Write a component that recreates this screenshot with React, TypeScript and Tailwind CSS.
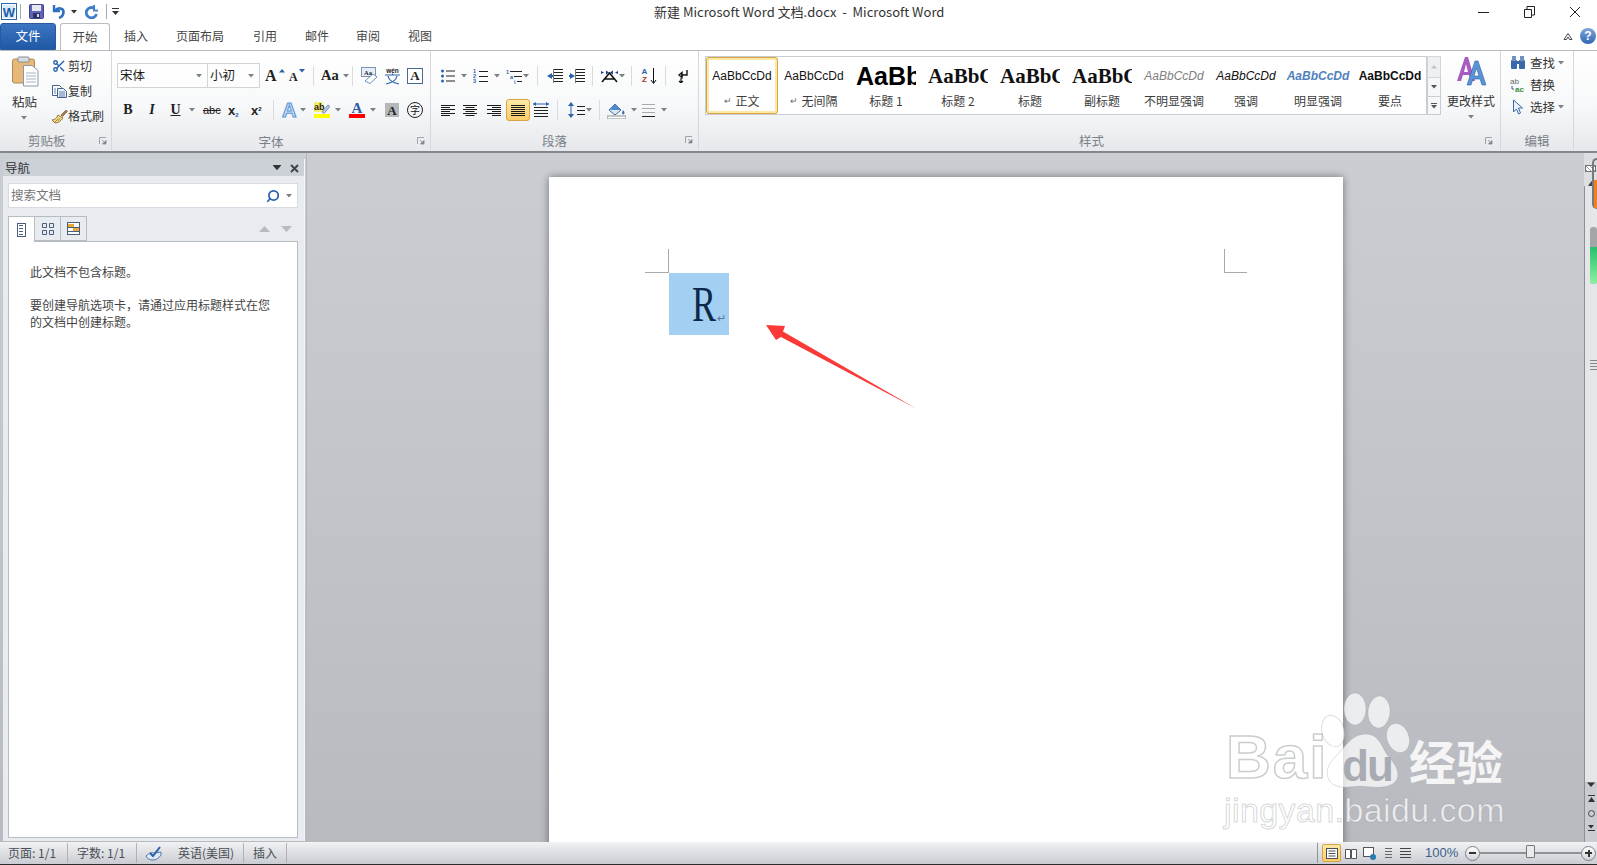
import React from "react";
import { Scissors, Search } from "lucide-react";

const cjk = "font-['Noto_Sans_CJK_SC','Liberation_Sans',sans-serif]";

type P = { className?: string };
const S = ({ w, h, className = "", children }: { w: number; h: number; className?: string; children?: React.ReactNode }) => (
  <svg width={w} height={h} viewBox={`0 0 ${w} ${h}`} className={`shrink-0 block ${className}`}>{children}</svg>
);
const Caret = ({ className = "", c = "#7d8084" }: P & { c?: string }) => (
  <S w={6} h={4} className={className}><path d="M0 0h6L3 3.5z" fill={c} /></S>
);
const Sep = ({ className = "" }: P) => <div className={`w-[1px] h-[20px] bg-[#d9dbdf] shrink-0 ${className}`} />;
const Launcher = ({ className = "" }: P) => (
  <S w={8} h={8} className={className}>
    <path d="M.5 7V.5H7" fill="none" stroke="#a0a4a8" />
    <path d="M3 3l3 3M7 3.5V7H3.5z" stroke="#80858a" fill="#80858a" strokeWidth={0.8} />
  </S>
);

const WordLogo = () => (
  <S w={16} h={17} className="ml-[1px]">
    <rect x=".5" y=".5" width="15" height="16" fill="#fff" stroke="#2a66ac" />
    <rect x="2" y="2" width="12" height="13" fill="#dbe9f7" />
    <text x="8" y="13.5" textAnchor="middle" fontSize="13" fontWeight="700" fontFamily="Liberation Sans" fill="#1d5fae">W</text>
  </S>
);
const Save = ({ className = "" }: P) => (
  <S w={15} h={15} className={className}>
    <rect x=".5" y=".5" width="14" height="14" rx="1" fill="#5f65b8" stroke="#3f4382" />
    <rect x="3" y="1" width="9" height="6" fill="#e6e8f4" />
    <rect x="4" y="9" width="7" height="5" fill="#2e3166" />
    <rect x="8" y="10" width="2" height="3" fill="#d6d8ea" />
  </S>
);
const Undo = ({ className = "" }: P) => (
  <S w={13} h={15} className={className}>
    <path d="M2 1v6h6" fill="none" stroke="#2f70c0" strokeWidth="2.4" />
    <path d="M3 6.500C6 3 11.500 4 11.500 8c0 3-2 5-4.500 6" fill="none" stroke="#2f70c0" strokeWidth="2.6" />
  </S>
);
const Redo = ({ className = "" }: P) => (
  <S w={13} h={14} className={className}>
    <path d="M9 0v5.500h4" fill="none" stroke="#4f86c8" strokeWidth="2" />
    <path d="M9.500 3.500A5.200 5.200 0 1 0 11.500 9" fill="none" stroke="#3f7cc8" strokeWidth="2.800" />
  </S>
);
const Paste = () => (
  <S w={27} h={31} className="ml-[12px] mt-[5px]">
    <rect x=".5" y="3" width="22" height="24" rx="2" fill="#e7b878" stroke="#b08a52" />
    <rect x="6" y="1" width="11" height="5" rx="1" fill="#d8dde2" stroke="#8a8f94" />
    <path d="M11.5 9.5H20l6 5v15.5H11.5z" fill="#fdfdfe" stroke="#8c98a8" />
    <path d="M14 17h10M14 20h10M14 23h10M14 26h10" stroke="#a5b4c6" />
  </S>
);
const CopyI = () => (
  <S w={15} h={13}>
    <path d="M.5.5h7l2 2v8h-9z" fill="#fff" stroke="#46628a" />
    <path d="M5.5 3.5h6l3 3v6h-9z" fill="#eaf0f8" stroke="#46628a" />
    <path d="M7 7h6M7 9h6M7 11h6" stroke="#5d81b0" />
    <path d="M2 4h2M2 6h2M2 8h2" stroke="#5d81b0" />
  </S>
);
const Brush = () => (
  <S w={17} h={15}>
    <path d="M10 6l5-5 1.5 1.5-5 5z" fill="#a57c44" stroke="#6b5230" strokeWidth=".6" />
    <path d="M1 11c3 0 5-2 6-5l5 3c-2 3-5 5-8 5z" fill="#f4dc8c" stroke="#91783c" />
    <path d="M4 13l3-3M7 12l2-3" stroke="#a38a46" />
  </S>
);
const Lines = ({ n = 4, w = 14, x = 0, gap = 3, c = "#222", y = 1 }: { n?: number; w?: number; x?: number; gap?: number; c?: string; y?: number }) => (
  <>
    {Array.from({ length: n }).map((_, i) => (
      <rect key={i} x={x} y={y + i * gap} width={w} height={1} fill={c} />
    ))}
  </>
);
const Bullets = ({ className = "" }: P) => (
  <S w={14} h={14} className={className}>
    {[2, 7, 12].map((y) => <rect key={y} x="0" y={y - 1.5} width="3" height="3" rx="1.5" fill="#2a62ab" />)}
    {[2, 7, 12].map((y) => <rect key={y} x="5" y={y - 0.5} width="9" height="1" fill="#222" />)}
  </S>
);
const Numbered = ({ className = "" }: P) => (
  <S w={15} h={14} className={className}>
    {[4, 9, 14].map((y, i) => <text key={y} x="0" y={y} fontSize="5.5" fontWeight="700" fontFamily="Liberation Sans" fill="#2a62ab">{i + 1}</text>)}
    {[2, 7, 12].map((y) => <rect key={y} x="6" y={y} width="9" height="1" fill="#222" />)}
  </S>
);
const Multi = ({ className = "" }: P) => (
  <S w={16} h={15} className={className}>
    <text x="0" y="5" fontSize="5.5" fontWeight="700" fontFamily="Liberation Sans" fill="#2a62ab">1</text>
    <text x="4" y="10" fontSize="5.5" fontWeight="700" fontFamily="Liberation Sans" fill="#2a62ab">a</text>
    <text x="8" y="15" fontSize="5.5" fontWeight="700" fontFamily="Liberation Sans" fill="#2a62ab">i</text>
    <rect x="4" y="2" width="12" height="1" fill="#222" />
    <rect x="8" y="7" width="8" height="1" fill="#222" />
    <rect x="11" y="12" width="5" height="1" fill="#222" />
  </S>
);
const Indent = ({ className = "", rev = false }: P & { rev?: boolean }) => (
  <S w={17} h={14} className={className}>
    <Lines n={5} w={9} x={7} gap={3} y={0} />
    <rect x="6" y="0" width="1" height="14" fill="#777" />
    {rev
      ? <path d="M0 7l5-3v2h1v2H5v2z" fill="#2a62ab" transform="translate(6 0) scale(-1 1)" />
      : <path d="M0 7l5-3v2h1v2H5v2z" fill="#2a62ab" />}
  </S>
);
const AlignI = ({ className = "", kind }: P & { kind: "l" | "c" | "r" | "j" }) => {
  const rows = kind === "j" ? [14, 14, 14, 14, 14, 14] : [14, 9, 14, 9, 14, 9];
  return (
    <S w={14} h={13} className={className}>
      {rows.map((w, i) => (
        <rect key={i} x={kind === "l" || kind === "j" ? 0 : kind === "c" ? (14 - w) / 2 : 14 - w} y={1 + i * 2} width={w} height={1} fill="#1a1a1a" />
      ))}
    </S>
  );
};

function Ribbon1Font() {
  const Combo = ({ t, w }: { t: string; w: string }) => (
    <div className={`${w} h-[25px] bg-white/60 border border-[#d0d3d8] flex items-center justify-between pl-[2px] pr-[5px] text-[12.5px] text-[#1e1e1e]`}>
      <span>{t}</span><Caret />
    </div>
  );
  return (
    <div className="flex flex-col w-[318px] shrink-0">
      <div className="flex items-center h-[25px] mt-[12px] ml-[5px]">
        <Combo t="宋体" w="w-[91px]" />
        <Combo t="小初" w="w-[53px] ml-[-1px]" />
        <span className="ml-[5px] w-[15px] font-['Liberation_Serif'] font-bold text-[16px] text-[#222] leading-none">A</span>
        <S w={6} h={4} className="mb-[10px] ml-[-1px]"><path d="M3 0l3 3.5H0z" fill="#2a62ab" /></S>
        <span className="ml-[4px] w-[10px] font-['Liberation_Serif'] font-bold text-[12px] text-[#222] leading-none mt-[3px]">A</span>
        <S w={6} h={4} className="mb-[10px]"><path d="M0 0h6L3 3.5z" fill="#2a62ab" /></S>
        <Sep className="ml-[8px]" />
        <span className="ml-[7px] w-[23px] font-['Liberation_Serif'] font-bold text-[14.5px] text-[#222] leading-none">Aa</span>
        <Caret className="ml-[-1px]" />
        <Sep className="ml-[3px]" />
        <S w={17} h={17} className="ml-[8px]">
          <rect x=".5" y=".5" width="14" height="9" fill="#e8eef6" stroke="#7e94b2" />
          <text x="3" y="7.5" fontSize="6.5" fontWeight="700" fontFamily="Liberation Serif" fill="#223">Aa</text>
          <path d="M4 14l8-7 4 3-7 6.5z" fill="#fff" stroke="#6f8fb8" />
        </S>
        <S w={17} h={18} className="ml-[6px]">
          <text x="8.5" y="6" textAnchor="middle" fontSize="6.5" fontWeight="700" fontFamily="Liberation Sans" fill="#222">wén</text>
          <path d="M1 8h15M8.5 6.5V8M4 9c1 5 6 7 11 8M13 9c-1 5-6 7-11 8" fill="none" stroke="#2a62ab" strokeWidth="1.2" />
        </S>
        <div className="ml-[6px] w-[16px] h-[16px] border border-[#4a6a92] bg-white flex items-center justify-center font-['Liberation_Serif'] font-bold text-[13px] leading-none text-[#222]">A</div>
      </div>
      <div className="flex items-center h-[22px] mt-[11px] ml-[10px] text-[#222]">
        <span className="w-[12px] text-center font-['Liberation_Serif'] font-bold text-[14px] leading-none">B</span>
        <span className="ml-[12px] w-[12px] text-center font-['Liberation_Serif'] italic font-bold text-[14px] leading-none">I</span>
        <span className="ml-[12px] w-[11px] text-center font-['Liberation_Serif'] font-bold text-[14px] leading-none underline">U</span>
        <Caret className="ml-[8px]" />
        <span className="ml-[8px] w-[16px] text-center font-['Liberation_Sans'] text-[11px] leading-none line-through">abc</span>
        <span className="ml-[9px] w-[13px] font-['Liberation_Sans'] font-bold text-[13px] leading-none">x<sub className="text-[6px] text-[#2a62ab] bottom-[-2px]">2</sub></span>
        <span className="ml-[10px] w-[13px] font-['Liberation_Sans'] font-bold text-[13px] leading-none">x<sup className="text-[6px] top-[-4px]">2</sup></span>
        <Sep className="ml-[9px]" />
        <span className="ml-[8px] w-[15px] font-['Liberation_Sans'] font-bold text-[20px] leading-none text-[#c4dcf5] [-webkit-text-stroke:1px_#5b93d4]">A</span>
        <Caret className="ml-[3px]" />
        <div className="ml-[8px] w-[16px] flex flex-col items-center">
          <S w={16} h={12}>
            <rect x="0" y="0" width="9" height="10" fill="#f4ef6a" />
            <text x="0" y="8" fontSize="9" fontWeight="700" fontFamily="Liberation Sans" fill="#222">ab</text>
            <path d="M8 10l6-7 2 1.5-6 7z" fill="#b8cbe3" stroke="#54719a" strokeWidth=".7" />
          </S>
          <div className="w-[16px] h-[4px] bg-[#ffff00]" />
        </div>
        <Caret className="ml-[5px]" />
        <div className="ml-[8px] w-[16px] flex flex-col items-center">
          <span className="font-['Liberation_Serif'] font-bold text-[15px] leading-[12px] text-[#2f5ca8] h-[12px]">A</span>
          <div className="w-[16px] h-[4px] bg-[#f00]" />
        </div>
        <Caret className="ml-[5px]" />
        <div className="ml-[9px] w-[14px] h-[14px] bg-[#b5b7ba] flex items-center justify-center font-['Liberation_Serif'] font-bold text-[13px] leading-none text-[#222]">A</div>
        <div className="ml-[8px] w-[16px] h-[16px] rounded-full border border-[#222] flex items-center justify-center text-[10px] leading-none text-[#111]">字</div>
      </div>
      <div className="mt-[12px] relative h-[17px] text-center text-[12.5px] leading-[17px] text-[#7b8087]">
        <span>字体</span>
        <Launcher className="absolute right-[5px] top-[4px]" />
      </div>
    </div>
  );
}

function Para() {
  return (
    <div className="flex flex-col w-[267px] shrink-0">
      <div className="flex items-center h-[20px] mt-[15px] ml-[10px]">
        <Bullets />
        <Caret className="ml-[6px]" />
        <Numbered className="ml-[6px]" />
        <Caret className="ml-[6px]" />
        <Multi className="ml-[6px]" />
        <Caret className="ml-[1px]" />
        <Sep className="ml-[8px]" />
        <Indent className="ml-[9px]" />
        <Indent className="ml-[5px]" rev />
        <Sep className="ml-[6px]" />
        <S w={17} h={13} className="ml-[8px]">
          <path d="M1 12L8.5 3 16 12M4 9h9" fill="none" stroke="#111" strokeWidth="1.6" />
          <path d="M0 1l3 1.5L0 4zM17 1l-3 1.5 3 1.5z" fill="#1c3f86" />
          <path d="M5 .5l3 2-3 2zM12 .5l-3 2 3 2z" fill="#1c3f86" />
        </S>
        <Caret className="ml-[1px]" />
        <Sep className="ml-[6px]" />
        <div className="ml-[8px] w-[18px] flex items-center">
          <div className="flex flex-col items-center text-[8px] font-bold font-['Liberation_Sans'] leading-[8px] w-[9px]">
            <span className="text-[#2a62ab]">A</span><span className="text-[#a33]">Z</span>
          </div>
          <S w={7} h={16} className="ml-[1px]"><path d="M3.5 0v15M1 12l2.5 3.5L6 12" fill="none" stroke="#111" strokeWidth="1" /></S>
        </div>
        <Sep className="ml-[7px]" />
        <S w={10} h={14} className="ml-[12px]">
          <path d="M9 1v5H3M1 6l3-2.5v5z" fill="none" stroke="#111" strokeWidth="1.4" />
          <path d="M3 9v5M1 12l2 2 2-2" fill="none" stroke="#111" strokeWidth="1.2" />
        </S>
      </div>
      <div className="flex items-center h-[22px] mt-[13px] ml-[10px]">
        <AlignI kind="l" />
        <AlignI kind="c" className="ml-[8px]" />
        <AlignI kind="r" className="ml-[10px]" />
        <div className="ml-[5px] w-[24px] h-[22px] rounded-[3px] border border-[#d9a441] bg-[linear-gradient(#fde9a6,#fbce6a)] flex items-center justify-center">
          <AlignI kind="j" />
        </div>
        <S w={16} h={16} className="ml-[3px]">
          <path d="M0 2h16" stroke="#2a62ab" />
          <path d="M0 2l3-2v4zM16 2l-3-2v4z" fill="#2a62ab" />
          <Lines n={4} w={14} x={1} gap={3} y={5} />
        </S>
        <Sep className="ml-[8px]" />
        <S w={10} h={16} className="ml-[8px]"><path d="M5 1v14" stroke="#2a62ab" /><path d="M5 0L8 4H2zM5 16L2 12h6z" fill="#2a62ab" /></S>
        <S w={8} h={12} className="ml-[1px]"><Lines n={3} w={8} gap={4} y={2} /></S>
        <Caret className="ml-[1px]" />
        <Sep className="ml-[7px]" />
        <S w={19} h={17} className="ml-[7px]">
          <path d="M2 8l6-6 6 6-6 5z" fill="#dce8f6" stroke="#3f6aa5" />
          <path d="M8 2l6 6H3" fill="#4e8ad0" />
          <path d="M16 8c1.5 2 2 3 1 4s-2 0-2-1z" fill="#3f6aa5" />
          <rect x="0" y="14" width="19" height="3" fill="#fff" stroke="#8c8f94" />
        </S>
        <Caret className="ml-[5px]" />
        <div className="ml-[5px] w-[13px] h-[13px] border-b border-b-[#222] [background:repeating-linear-gradient(#aaa_0_1px,transparent_1px_4px)]" />
        <Caret className="ml-[6px]" />
      </div>
      <div className="mt-[11px] pr-[20px] relative h-[17px] text-center text-[12.5px] leading-[17px] text-[#7b8087]">
        <span>段落</span>
        <Launcher className="absolute right-[5px] top-[4px]" />
      </div>
    </div>
  );
}

const styles: { s: string; l: string; c: string }[] = [
  { s: "AaBbCcDd", l: "正文", c: "font-['Liberation_Sans'] text-[12px] text-[#111]" },
  { s: "AaBbCcDd", l: "无间隔", c: "font-['Liberation_Sans'] text-[12px] text-[#111]" },
  { s: "AaBbCcDd", l: "标题 1", c: "font-['Liberation_Sans'] font-bold text-[25px] text-black" },
  { s: "AaBbCcDd", l: "标题 2", c: "font-['Liberation_Serif'] font-bold text-[21px] text-[#111]" },
  { s: "AaBbCcDd", l: "标题", c: "font-['Liberation_Serif'] font-bold text-[21px] text-[#111]" },
  { s: "AaBbCcDd", l: "副标题", c: "font-['Liberation_Serif'] font-bold text-[21px] text-[#111]" },
  { s: "AaBbCcDd", l: "不明显强调", c: "font-['Liberation_Sans'] italic text-[12px] text-[#808080]" },
  { s: "AaBbCcDd", l: "强调", c: "font-['Liberation_Sans'] italic text-[12px] text-[#111]" },
  { s: "AaBbCcDd", l: "明显强调", c: "font-['Liberation_Sans'] italic font-bold text-[12px] text-[#4f81bd]" },
  { s: "AaBbCcDd", l: "要点", c: "font-['Liberation_Sans'] font-bold text-[12px] text-[#111]" },
];

function Styles() {
  return (
    <div className="flex flex-col w-[801px] shrink-0">
      <div className="flex h-[79px]">
        <div className="flex ml-[6px] mt-[5px] h-[59px] w-[722px] border border-[#c9ccd1] bg-white shrink-0">
          {styles.map((it, i) => (
            <div key={i} className={`w-[72px] shrink-0 h-[57px] flex flex-col items-center overflow-hidden px-[2px] rounded-[3px] ${i === 0 ? "border-[3px] border-[#fde9a6] outline outline-[1px] outline-[#d9a441] outline-offset-[-1px] pt-[2px]" : "pt-[5px]"}`}>
              <div className={`h-[28px] flex items-center whitespace-nowrap leading-none w-full justify-center overflow-hidden ${it.c}`}><span className={i >= 2 && i <= 5 ? "self-center w-[60px] overflow-hidden" : ""}>{it.s}</span></div>
              <div className="text-[12px] leading-[17px] text-[#3c3c3c] flex items-center gap-[3px] mt-[2px] whitespace-nowrap">
                {i < 2 && <span className="text-[9px] text-[#666]">↵</span>}{it.l}
              </div>
            </div>
          ))}
        </div>
        <div className="mt-[5px] w-[14px] h-[59px] flex flex-col shrink-0">
          <div className="h-[22px] border border-[#d4d6da] bg-[#eef0f3] flex items-center justify-center"><S w={6} h={4}><path d="M3 0l3 3.5H0z" fill="#c0c3c8" /></S></div>
          <div className="h-[19px] border border-t-0 border-[#c9ccd1] bg-[#f6f7f9] flex items-center justify-center"><Caret c="#555" /></div>
          <div className="h-[18px] border border-t-0 border-[#c9ccd1] bg-[#f6f7f9] flex flex-col items-center justify-center gap-[1px]"><div className="w-[6px] h-[1px] bg-[#555]" /><Caret c="#555" /></div>
        </div>
        <div className="flex flex-col items-center w-[50px] ml-[5px] mt-[4px] shrink-0">
          <S w={30} h={31}>
            <path d="M1 26L9 2h3l7 24h-4l-2-6H7l-2 6zM8 17h4L10 9z" fill="#a65cc0" />
            <path d="M11 30L19 6h3l8 24h-4l-2-6h-7l-2 6zM18 21h5l-2.5-8z" fill="#5b93d4" stroke="#2a62ab" strokeWidth=".6" />
          </S>
          <span className="text-[12px] leading-[17px] text-[#333] mt-[6px] whitespace-nowrap">更改样式</span>
          <Caret className="mt-[6px]" />
        </div>
      </div>
      <div className="mt-[2px] mb-0 relative h-[17px] text-[12.5px] leading-[17px] text-[#7b8087]">
        <span className="absolute left-[380px]">样式</span>
        <Launcher className="absolute right-[7px] top-[5px]" />
      </div>
    </div>
  );
}

function Editing() {
  const Row = ({ icon, t, caret = true, cls = "" }: { icon: React.ReactNode; t: string; caret?: boolean; cls?: string }) => (
    <div className={`flex items-center h-[18px] ml-[9px] ${cls}`}>
      <div className="w-[19px] flex justify-start">{icon}</div>
      <span className="text-[12.5px] leading-none text-[#333] ml-[1px]">{t}</span>
      {caret && <Caret className="ml-[3px]" />}
    </div>
  );
  return (
    <div className="flex flex-col w-[72px] shrink-0">
      <div className="h-[79px] pt-[3px]">
        <Row t="查找" icon={<S w={16} h={14}><rect x="1" y="4" width="6" height="9" rx="1" fill="#3b68a6" /><rect x="9" y="4" width="6" height="9" rx="1" fill="#3b68a6" /><rect x="2" y="0" width="4" height="5" fill="#6f92c3" /><rect x="10" y="0" width="4" height="5" fill="#6f92c3" /><rect x="7" y="5" width="2" height="3" fill="#3b68a6" /></S>} />
        <Row cls="mt-[4px]" t="替换" caret={false} icon={<S w={16} h={16}><text x="0" y="7" fontSize="8" fontFamily="Liberation Sans" fill="#666">ab</text><text x="5" y="15" fontSize="8" fontWeight="700" fontFamily="Liberation Sans" fill="#3a8f3a">ac</text><path d="M2 9v3h2" fill="none" stroke="#2a62ab" /></S>} />
        <Row cls="mt-[4px]" t="选择" icon={<S w={13} h={16} className="ml-[2px]"><path d="M1.5 1v12l3-3 2 5 2-1-2-5h4z" fill="#eaf1fa" stroke="#3f6aa5" /></S>} />
      </div>
      <div className="mt-[2px] h-[17px] text-center text-[12.5px] leading-[17px] text-[#7b8087]">编辑</div>
    </div>
  );
}

function Clipboard() {
  const Row = ({ icon, t, cls = "" }: { icon: React.ReactNode; t: string; cls?: string }) => (
    <div className={`flex items-center h-[18px] ${cls}`}>
      <div className="w-[18px] flex justify-center">{icon}</div>
      <span className="text-[12px] leading-none text-[#333]">{t}</span>
    </div>
  );
  return (
    <div className="flex flex-col w-[111px] shrink-0">
      <div className="flex h-[79px]">
        <div className="w-[50px] flex flex-col items-start">
          <Paste />
          <span className="ml-[12px] mt-[6px] text-[12.5px] leading-[17px] text-[#333]">粘贴</span>
          <Caret className="ml-[21px] mt-[6px]" />
        </div>
        <div className="flex flex-col pt-[6px]">
          <Row t="剪切" icon={<Scissors size={14} color="#2a62ab" strokeWidth={2.4} />} />
          <Row t="复制" cls="mt-[7px]" icon={<CopyI />} />
          <Row t="格式刷" cls="mt-[7px]" icon={<Brush />} />
        </div>
      </div>
      <div className="mt-[2px] relative h-[17px] text-[12.5px] leading-[17px] text-[#7b8087]">
        <span className="ml-[28px]">剪贴板</span>
        <Launcher className="absolute right-[4px] top-[5px]" />
      </div>
    </div>
  );
}

const GroupSep = () => <div className="w-[1px] h-[99px] shrink-0 bg-[#d5d8dd]" />;

const Arrow = () => (
  <svg className="absolute left-[760px] top-[320px]" width="160" height="95" viewBox="760 320 160 95">
    <path d="M766 325L785 326 783 331.500 917 409 781 337 776 340z" fill="#fb3a37" />
  </svg>
);

const Watermark = () => (
  <div className="absolute left-[1220px] top-[690px] w-[300px] h-[150px] pointer-events-none">
    <svg className="absolute left-[0px] top-[0px]" width="300" height="110" viewBox="1220 690 300 110">
      <g fill="#fff" fillOpacity=".72" stroke="#9ea2a8" strokeOpacity=".35">
        <ellipse cx="1355" cy="709" rx="11" ry="16" />
        <ellipse cx="1379" cy="712" rx="11" ry="16" transform="rotate(5 1379 712)" />
        <ellipse cx="1333" cy="731" rx="11" ry="16" transform="rotate(-15 1333 731)" />
        <ellipse cx="1398" cy="738" rx="11" ry="15" transform="rotate(-20 1398 738)" />
        <path d="M1366 734c-14 0-20 12-28 20-8 8-14 16-9 26 3 6 12 8 20 7 8-1 14-1 22 0 10 1 20 0 25-6 5-8-1-17-7-24-7-8-9-23-23-23z" />
      </g>
    </svg>
    <span className="absolute left-[6px] top-[36px] font-['Liberation_Sans'] font-bold text-[62px] leading-none tracking-[2px] text-white/70 [-webkit-text-stroke:1.500px_rgba(150,155,160,.5)]">Bai</span>
    <span className="absolute left-[122px] top-[54px] font-['Liberation_Sans'] font-bold text-[44px] leading-none tracking-[-2px] text-[#a8acb2]">du</span>
    <span className={`absolute left-[189px] top-[46px] text-[47px] leading-none font-bold text-white/85 ${cjk}`}>经验</span>
    <span className="absolute left-[4px] top-[103px] font-['Liberation_Sans'] text-[34px] leading-none whitespace-nowrap text-white/75 [-webkit-text-stroke:1px_rgba(150,155,160,.4)] tracking-[0.4px]">jingyan.baidu.com</span>
  </div>
);

export default function App() {
  return (
    <div className={`relative w-[1597px] h-[865px] overflow-hidden flex flex-col bg-white ${cjk}`}>
      {/* title bar */}
      <div className="h-[23px] flex items-center relative shrink-0">
        <WordLogo />
        <div className="ml-[3px] w-[1px] h-[15px] bg-[#aaa]" />
        <Save className="ml-[8px]" />
        <Undo className="ml-[8px]" />
        <Caret c="#333" className="ml-[6px]" />
        <Redo className="ml-[8px]" />
        <div className="ml-[8px] w-[1px] h-[15px] bg-[#aaa]" />
        <S w={7} h={7} className="ml-[5px]"><rect width="7" height="1" fill="#333" /><path d="M0 3h7L3.5 7z" fill="#333" /></S>
        <div className="ml-[535px] w-[289px] shrink-0 text-[13px] leading-none whitespace-nowrap text-[#333] text-center">新建 Microsoft Word 文档.docx&nbsp; -&nbsp; Microsoft Word</div>
        <S w={11} h={2} className="ml-[535px] mt-[3px]"><rect width="11" height="1" fill="#222" /></S>
        <S w={11} h={12} className="ml-[35px]"><path d="M.5 3.5h7v8h-7zM3 3V.5h7.5V9H8" fill="none" stroke="#222" /></S>
        <S w={12} h={12} className="ml-[34px]"><path d="M1 1l10 10M11 1L1 11" stroke="#222" strokeWidth="1" /></S>
      </div>
      {/* tabs */}
      <div className="h-[27px] flex items-end shrink-0 text-[12px] text-[#444]">
        <div className="w-[56px] h-[27px] rounded-t-[3px] border border-[#2a5a9e] bg-[linear-gradient(#3c76c2,#1f58a5)] text-white text-[12.5px] flex items-center justify-center">文件</div>
        <div className="ml-[4px] w-[50px] h-[27px] rounded-t-[3px] border border-[#b9bcc1] border-b-0 bg-white text-[12.5px] flex items-center justify-center relative z-10">开始</div>
        <span className="ml-[14px] h-[27px] leading-[26px]">插入</span>
        <span className="ml-[28px] h-[27px] leading-[26px]">页面布局</span>
        <span className="ml-[29px] h-[27px] leading-[26px]">引用</span>
        <span className="ml-[28px] h-[27px] leading-[26px]">邮件</span>
        <span className="ml-[27px] h-[27px] leading-[26px]">审阅</span>
        <span className="ml-[28px] h-[27px] leading-[26px]">视图</span>
        <div className="ml-auto flex items-center h-[27px] pb-[2px]">
          <S w={10} h={8}><path d="M1 7.5L5 1.5l4 6H6.5L5 5 3.500 7.500z" fill="none" stroke="#444" /></S>
          <div className="ml-[7px] mr-[1px] w-[16px] h-[16px] rounded-full bg-[linear-gradient(#7fa8da,#2f66b3)] text-white font-['Liberation_Sans'] font-bold text-[12px] leading-[16px] text-center">?</div>
        </div>
      </div>
      {/* ribbon */}
      <div className="h-[103px] shrink-0 flex border-t border-[#b7bac0] border-b-[2px] border-b-[#83878c] bg-[linear-gradient(#ffffff_0%,#f7f8f9_55%,#e6e8ec_100%)]">
        <Clipboard /><GroupSep />
        <Ribbon1Font /><GroupSep />
        <Para /><GroupSep />
        <Styles /><GroupSep />
        <Editing /><GroupSep />
      </div>
      {/* workspace */}
      <div className="flex-1 min-h-0 flex bg-[linear-gradient(#caced3,#b8babf)]">
        {/* nav */}
        <div className="w-[306px] shrink-0 pl-[3px] pt-[6px] pb-[1px] flex flex-col">
          <div className="flex-1 min-h-0 w-[302px] bg-[#e8ebef] border-r border-[#f4f5f7] flex flex-col">
            <div className="h-[17px] bg-[#ccd1d8] flex items-center text-[12.5px] text-[#333] pl-[2px] pt-[1px]">
              <span>导航</span>
              <Caret c="#333" className="ml-auto scale-[1.5]" />
              <S w={9} h={9} className="ml-[10px] mr-[5px]"><path d="M1 1l7 7M8 1L1 8" stroke="#444" strokeWidth="2" /></S>
            </div>
            <div className="ml-[5px] mt-[7px] w-[290px] h-[25px] bg-white border border-[#d7dbe1] flex items-center pl-[2px] text-[12.5px] text-[#777]">
              <span>搜索文档</span>
              <Search size={14} strokeWidth={3} color="#2a62ab" className="ml-auto scale-x-[-1]" />
              <Caret className="ml-[6px] mr-[5px]" />
            </div>
            <div className="ml-[5px] mt-[8px] h-[25px] w-[290px] flex relative z-10">
              <div className="w-[27px] h-[26px] bg-white border border-[#b7bbc2] border-b-0 flex items-center justify-center">
                <S w={9} h={14}><rect x=".5" y=".5" width="8" height="13" fill="#fff" stroke="#4b5f7a" /><Lines n={4} w={4} x={2} gap={3} y={2} c="#4b5f7a" /></S>
              </div>
              <div className="w-[26px] h-[25px] border border-l-0 border-[#b7bbc2] flex items-center justify-center">
                <S w={12} h={12}><path d="M.5.5h4v4h-4zM7.500.5h4v4h-4zM.5 7.500h4v4h-4zM7.500 7.500h4v4h-4z" fill="none" stroke="#4b5f7a" /></S>
              </div>
              <div className="w-[26px] h-[25px] border border-l-0 border-[#b7bbc2] flex items-center justify-center">
                <S w={13} h={13}><rect x=".5" y=".5" width="12" height="12" fill="#fff" stroke="#4b5f7a" /><rect x="1" y="2" width="6" height="3" fill="#e9a93a" /><rect x="6" y="6" width="6" height="3" fill="#e9a93a" /><path d="M1 5.500h11M1 9.500h11" stroke="#4b5f7a" /></S>
              </div>
              <S w={11} h={6} className="ml-[172px] mt-[10px]"><path d="M5.500 0L11 6H0z" fill="#b8babd" /></S>
              <S w={11} h={6} className="ml-[11px] mt-[10px]"><path d="M0 0h11L5.500 6z" fill="#b8babd" /></S>
            </div>
            <div className="ml-[5px] w-[290px] flex-1 min-h-0 mb-[3px] bg-white border border-[#b7bbc2] pl-[21px] pt-[21px] text-[12px] leading-[17px] text-[#444]">
              <p>此文档不包含标题。</p>
              <p className="mt-[16px] w-[245px]">要创建导航选项卡，请通过应用标题样式在您的文档中创建标题。</p>
            </div>
          </div>
        </div>
        {/* doc */}
        <div className="flex-1 min-w-0 pl-[242px] pt-[24px] overflow-hidden border-l border-[#b4b7bc]">
          <div className="relative w-[794px] h-[700px] bg-white shadow-[0_0_8px_rgba(0,0,0,.45)] pl-[120px] pt-[96px]">
            <div className="absolute left-[96px] top-[95px] w-[23px] h-[1px] bg-[#aaa]" />
            <div className="absolute left-[119px] top-[72px] w-[1px] h-[24px] bg-[#aaa]" />
            <div className="absolute left-[675px] top-[72px] w-[1px] h-[24px] bg-[#aaa]" />
            <div className="absolute left-[675px] top-[95px] w-[23px] h-[1px] bg-[#aaa]" />
            <div className="w-[60px] h-[62px] bg-[#a3cff2] flex items-end pl-[23px] pb-[14px]">
              <span className="inline-block w-[24px] origin-left scale-x-[.72] font-['Liberation_Serif'] text-[50px] leading-[34px] h-[34px] text-[#0b2a4a]">R</span>
              <span className="text-[11px] leading-none text-[#5b7896] mb-[-2px] ml-[1px]">↵</span>
            </div>
          </div>
        </div>
        {/* scrollbar */}
        <div className="w-[13px] shrink-0 flex flex-col relative bg-[#dcdfe2]">
          <div className="h-[33px] flex flex-col items-start">
            <div className="mt-[12px] ml-[1px] w-[11px] h-[11px] border border-[#777] bg-white [background:repeating-linear-gradient(45deg,#999_0_1px,#fff_1px_3px)]" />
            <S w={7} h={5} className="mt-[9px] ml-[4px]"><path d="M3.500 0L7 5H0z" fill="#444" /></S>
          </div>
          <div className="flex-1 bg-[#e4e6e9] border-l border-[#8b8e93] flex flex-col items-end">
            <div className="mt-[41px] w-[7px] h-[57px] rounded-t-[3px] rounded-b-[3px] overflow-hidden bg-[#a3a5a8] flex flex-col justify-end">
              <div className="h-[37px] bg-[linear-gradient(#27c06e,#8ef0a0)]" />
            </div>
            <div className="mt-[76px] w-[7px] flex flex-col gap-[2px]">
              <div className="h-[1px] bg-[#888]" /><div className="h-[1px] bg-[#888]" /><div className="h-[1px] bg-[#888]" /><div className="h-[1px] bg-[#888]" />
            </div>
            <div className="mt-auto w-[12px] h-[60px] bg-[#c9ccd1] flex flex-col items-center pb-[1px]">
              <Caret c="#333" className="mt-[1px] scale-[1.4]" />
              <div className="mt-[8px] flex flex-col items-center gap-[1px]"><div className="w-[7px] h-[1px] bg-[#333]" /><S w={7} h={5}><path d="M3.500 0L7 5H0z" fill="#333" /></S></div>
              <div className="mt-[8px] w-[7px] h-[7px] rounded-full border border-[#444]" />
              <div className="mt-[8px] flex flex-col items-center gap-[1px]"><Caret c="#333" /><div className="w-[7px] h-[1px] bg-[#333]" /></div>
            </div>
          </div>
          <div className="absolute left-[8px] top-[5px] w-[5px] h-[51px] rounded-l-[5px] border-[2px] border-r-0 border-[#77797d]" />
          <div className="absolute left-[10px] top-[27px] w-[3px] h-[28px] bg-[#f08020]" />
        </div>
      </div>
      {/* status */}
      <div className="h-[23px] shrink-0 flex items-center border-b border-[#2b2b2b] bg-[linear-gradient(#f1f2f4,#c9ccd2)] text-[12px] text-[#4a4f55]">
        <span className="ml-[8px] w-[59px] shrink-0 whitespace-nowrap">页面: 1/1</span>
        <div className="w-[1px] h-[20px] shrink-0 bg-[#aeb1b6]" />
        <span className="ml-[9px] w-[59px] shrink-0 whitespace-nowrap">字数: 1/1</span>
        <div className="w-[1px] h-[20px] shrink-0 bg-[#aeb1b6]" />
        <S w={17} h={15} className="ml-[8px]">
          <path d="M1 10c3-3 6-4 8-3l7-1v3c-2 3-5 5-8 5-3 0-6-1-7-4z" fill="#dfe8f4" stroke="#4f78b0" />
          <path d="M5 7l3 3 7-9" fill="none" stroke="#2a62ab" strokeWidth="2" />
        </S>
        <span className="ml-[16px] w-[65px] shrink-0 whitespace-nowrap">英语(美国)</span>
        <div className="w-[1px] h-[20px] shrink-0 bg-[#aeb1b6]" />
        <span className="ml-[9px] w-[33px] shrink-0">插入</span>
        <div className="w-[1px] h-[20px] shrink-0 bg-[#aeb1b6]" />
        <div className="ml-[1030px] w-[1px] h-[20px] shrink-0 bg-[#8f9297]" />
        <div className="ml-[4px] w-[19px] h-[18px] shrink-0 rounded-[2px] border border-[#d9a441] bg-[linear-gradient(#fde9a6,#fbce6a)] flex items-center justify-center">
          <S w={12} h={11}><rect x=".5" y=".5" width="11" height="10" fill="#fff" stroke="#4a4f55" /><Lines n={3} w={7} x={2.500} gap={2.500} y={2.500} c="#4a4f55" /></S>
        </div>
        <S w={12} h={11} className="ml-[4px]"><path d="M.5 1.500h5v9h-5zM6.500 1.500h5v9h-5z" fill="#fff" stroke="#555" /></S>
        <S w={13} h={13} className="ml-[6px]"><rect x=".5" y=".5" width="10" height="9" fill="#fff" stroke="#555" /><circle cx="10" cy="10" r="3" fill="#2a7ab0" /></S>
        <S w={11} h={10} className="ml-[6px]"><Lines n={4} w={7} x={3} gap={3} y={0} c="#666" /></S>
        <S w={11} h={10} className="ml-[7px]"><Lines n={4} w={11} gap={3} y={0} c="#444" /></S>
        <span className="ml-[14px] w-[40px] shrink-0 font-['Liberation_Sans'] text-[13px] text-[#3b5f8a] whitespace-nowrap">100%</span>
        <div className="w-[15px] h-[15px] shrink-0 rounded-full border border-[#7d8187] bg-[linear-gradient(#fff,#cfd2d7)] flex items-center justify-center"><div className="w-[7px] h-[2px] bg-[#333]" /></div>
        <div className="relative w-[101px] h-[2px] shrink-0 bg-[#8f9297]">
          <div className="absolute left-[46px] top-[-7px] w-[9px] h-[13px] rounded-[1px] bg-[#e9ebee] border border-[#777]" />
        </div>
        <div className="w-[15px] h-[15px] shrink-0 rounded-full border border-[#7d8187] bg-[linear-gradient(#fff,#cfd2d7)] flex items-center justify-center relative"><div className="w-[7px] h-[2px] bg-[#333]" /><div className="absolute w-[2px] h-[7px] bg-[#333]" /></div>
      </div>
      <Arrow />
      <Watermark />
    </div>
  );
}
